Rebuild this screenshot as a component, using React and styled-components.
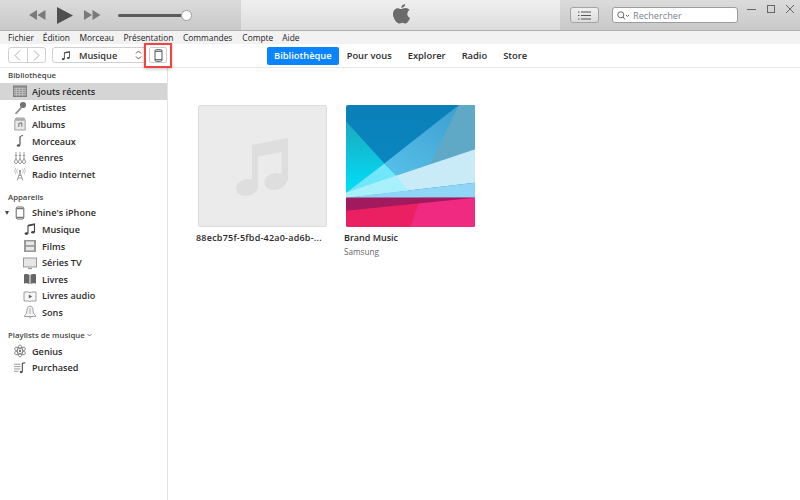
import React from "react";
import styled, { createGlobalStyle } from "styled-components";

const Global = createGlobalStyle`
  html, body { margin: 0; padding: 0; background: #fff; }
  body { font-family: "Open Sans", "Liberation Sans", sans-serif; color: #222; }
  * { box-sizing: border-box; }
`;

const Win = styled.div`width: 800px; height: 500px; display: flex; flex-direction: column; overflow: hidden; background: #fff;`;

const TitleBar = styled.header`
  height: 31px; display: flex; flex: none; border-bottom: 1px solid #b0b0b0;
  background: linear-gradient(#dbdbdb, #c9c9c9);
`;
const Transport = styled.div`width: 241px; display: flex; align-items: center; padding: 0 0 0 29px; flex: none;`;
const Lcd = styled.div`flex: 1; display: flex; align-items: center; justify-content: center; padding-bottom: 1px;
  background: linear-gradient(#efefef, #dddddd); `;
const RightTools = styled.div`width: 240px; flex: none; display: flex; align-items: flex-start; padding: 7px 0 0 10px;`;
const TIcon = styled.svg`display: block; flex: none; margin-right: ${p => p.$mr || 0}px;`;
const Track = styled.div`width: 69px; height: 3px; margin-left: 17px; background: #5c5c5c; border-radius: 2px; position: relative;`;
const Knob = styled.div`position: absolute; right: -5px; top: -4px; width: 11px; height: 11px; border-radius: 50%; background: #fff; border: 1px solid #a0a0a0;`;
const ListBtn = styled.div`width: 29px; height: 16px; border: 1px solid #a3a3a3; border-radius: 3px; display: flex; align-items: center; justify-content: center; background: linear-gradient(#f0f0f0, #dcdcdc);`;
const Search = styled.div`width: 126px; height: 16px; margin-left: 13px; border: 1px solid #9c9c9c; border-radius: 3px; background: #fff; display: flex; align-items: center; padding-left: 4px; font-size: 9.2px; color: #77838f; gap: 3px;`;
const WinBtns = styled.div`display: flex; gap: 9px; margin: -3px 0 0 9px;`;

const MenuBar = styled.nav`height: 13px; flex: none; background: #f2f2f2; display: flex; padding-left: 8px; font-size: 8.4px; line-height: 13px; color: #222;`;
const MenuItem = styled.span`margin-right: ${p => p.$mr}px;`;

const Toolbar = styled.div`height: 24px; flex: none; display: flex; align-items: flex-start; padding: 3px 0 0 8px; background: #fff; border-bottom: 1px solid #e8e8e8;`;
const NavPair = styled.div`display: flex; width: 38px; height: 16px; border: 1px solid #d0d0d0; border-radius: 3px;`;
const NavBtn = styled.div`flex: 1; display: flex; align-items: center; justify-content: center; & + & { border-left: 1px solid #d0d0d0; }`;
const Media = styled.div`width: 94px; height: 16px; margin-left: 6px; border: 1px solid #d0d0d0; border-radius: 3px; display: flex; align-items: center; padding: 0 3px 0 7px; font-size: 9.2px; font-weight: 600; color: #333;`;
const MediaLabel = styled.span`flex: 1; margin-left: 7px;`;
const DeviceBtn = styled.div`width: 18px; height: 16px; margin-left: 3px; border: 1px solid #d0d0d0; border-radius: 2px; display: flex; align-items: center; justify-content: center; position: relative;
  &::after { content: ""; position: absolute; left: -6px; right: -6px; top: -5px; bottom: -6px; border: 2px solid #ee4544; box-shadow: 0 1px 3px rgba(0,0,0,.25); }
`;
const Tabs = styled.div`display: flex; margin-left: 100px; align-items: center; height: 18px;`;
const Tab = styled.div`height: 18px; line-height: 17px; padding: 0 7px; margin-right: ${p => p.$mr || 0}px; border-radius: 2px; font-size: 9.35px; font-weight: 600; color: ${p => p.$on ? "#fff" : "#2b2b2b"}; background: ${p => p.$on ? "#0a84ff" : "transparent"};`;

const Body = styled.div`flex: 1; display: flex; min-height: 0;`;
const Sidebar = styled.aside`width: 168px; flex: none; border-right: 1px solid #e4e4e4;`;
const SecHead = styled.div`height: 15px; line-height: 15px; padding-left: 8px; margin-top: ${p => p.$mt || 0}px; font-size: 7.8px; font-weight: 600; color: #444; display: flex; align-items: center; gap: 2px;`;
const Row = styled.div`height: 16.6px; display: flex; align-items: center; padding-left: ${p => p.$pl || 13}px; font-size: 9.15px; font-weight: 600; color: #2c2c2c; background: ${p => p.$on ? "#d5d5d5" : "transparent"}; position: relative;`;
const RowIcon = styled.span`width: 14px; height: 14px; display: flex; align-items: center; justify-content: center; margin-right: 5px; flex: none;`;
const Arrow = styled.span`position: absolute; left: 5px; top: 6px; width: 0; height: 0; border-left: 2.5px solid transparent; border-right: 2.5px solid transparent; border-top: 4px solid #444;`;

const Main = styled.main`flex: 1; display: flex; padding: 37px 0 0 30px; gap: 19px; align-items: flex-start;`;
const Album = styled.div`width: 129px;`;
const Blank = styled.div`width: 129px; height: 122px; background: #ebebeb; border: 1px solid #dcdcdc; border-radius: 2px; display: flex; align-items: center; justify-content: center;`;
const Cover = styled.svg`display: block; width: 129px; height: 122px; border-radius: 2px;`;
const AlbumTitle = styled.div`margin: 5px 0 0 -2px; font-size: 9px; line-height: 12px; font-weight: 600; color: #2a2a2a; white-space: nowrap; letter-spacing: ${p => p.$ls || 0}px;`;
const AlbumSub = styled.div`margin: 2px 0 0 -2px; font-size: 8.2px; line-height: 11px; color: #666;`;

const Svg = ({ w = 14, h = 14, vb, children, ...r }) => <svg width={w} height={h} viewBox={vb || `0 0 ${w} ${h}`} fill="none" {...r}>{children}</svg>;

const icons = {
  grid: <Svg><rect x="0.5" y="2" width="13" height="10.5" fill="#999" stroke="#7a7a7a"/><path d="M0.5 4.5h13M0.5 6.5h13M0.5 8.5h13M0.5 10.5h13M3.5 4v8.5M6.5 4v8.5M9.5 4v8.5" stroke="#c8c8c8" strokeWidth=".6"/></Svg>,
  mic: <Svg><circle cx="10" cy="4" r="3" fill="#6a6a6a"/><path d="M8.3 2.800l3 3M7.800 4.200l2.500 2.500M9.600 1.600l2.800 2.800" stroke="#aaa" strokeWidth=".4"/><path d="M7.800 5.800L2 12.200l1 1.300L8.800 7.500z" fill="#8e8e8e"/></Svg>,
  album: <Svg><path d="M3 1h8l1.200 2.500V13H1.800V3.500z" fill="#e8e8e8" stroke="#8a8a8a" strokeWidth=".8"/><path d="M2 1.300h10v2.500H2z" fill="#aaa"/><path d="M5.800 10V6.400l3-.6v3.800" stroke="#555" strokeWidth=".8"/></Svg>,
  note: <Svg><path d="M7 3c.8-1 2-1.500 3-1.500M7 2.500V11" stroke="#555" strokeWidth="1.200"/><ellipse cx="5.500" cy="11.500" rx="1.700" ry="1.200" fill="#555"/></Svg>,
  genres: <Svg><path d="M3 1v7M7 1v7M11 1v7M1.800 4.500h2.400M5.800 4.500h2.400M9.800 4.500h2.400" stroke="#888" strokeWidth=".8"/><path d="M3 7.500l2 3.500-2 2-2-2zM7 7.500l2 3.500-2 2-2-2zM11 7.500l2 3.500-2 2-2-2z" stroke="#888" strokeWidth=".8" fill="#eee"/></Svg>,
  radio: <Svg><path d="M7 5L4.200 13.500M7 5l2.800 8.500M5 11h4M5.800 8.500h2.400" stroke="#888" strokeWidth=".8"/><circle cx="7" cy="4" r="1" fill="#777"/><path d="M4.500 1.800a3.500 3.500 0 0 0 0 4.400M9.500 1.800a3.500 3.500 0 0 1 0 4.400M2.800.8a5.500 5.500 0 0 0 0 6.400M11.200.8a5.500 5.500 0 0 1 0 6.400" stroke="#aaa" strokeWidth=".7"/></Svg>,
  phone: <Svg><rect x="3.200" y="1" width="7.600" height="12" rx="1.500" stroke="#555" strokeWidth=".9"/><path d="M3.500 2.700h7M3.500 11.300h7" stroke="#555" strokeWidth="1"/></Svg>,
  music: <Svg><path d="M5 3.300l6.500-1.300v8M5 3.300V11.500" stroke="#444" strokeWidth="1.100"/><path d="M5 3.300l6.500-1.300v1.300L5 4.600z" fill="#444"/><ellipse cx="3.400" cy="11.600" rx="1.800" ry="1.300" fill="#444"/><ellipse cx="9.900" cy="10.200" rx="1.800" ry="1.300" fill="#444"/></Svg>,
  film: <Svg><rect x="1" y="1" width="12" height="12" fill="#999"/><rect x="3" y="2.500" width="8" height="3.600" fill="#e8e8e8"/><rect x="3" y="7.800" width="8" height="3.600" fill="#e8e8e8"/></Svg>,
  tv: <Svg><rect x="0.500" y="2" width="13" height="9" fill="#e6e6e6" stroke="#999"/><path d="M5 12.500h4" stroke="#999" strokeWidth="1.200"/></Svg>,
  book: <Svg><path d="M1 2.500c2-.8 4-.6 5.500.3V12c-1.500-.9-3.500-1-5.500-.3zM13 2.500c-2-.8-4-.6-5.500.3V12c1.500-.9 3.500-1 5.500-.3z" fill="#666"/></Svg>,
  audiobook: <Svg><path d="M1 3h4.500L7 3.800 8.500 3H13v9H8.500L7 12.500 5.500 12H1z" stroke="#888" strokeWidth=".8" fill="#f6f6f6"/><path d="M5.800 5.500l3.400 2-3.400 2z" fill="#666"/></Svg>,
  bell: <Svg><path d="M7 1.200c2.200 0 3 1.800 3 4 0 2.600 1 4 2.500 5.300v1h-11v-1C3 9.200 4 7.800 4 5.200c0-2.200.8-4 3-4z" stroke="#888" strokeWidth=".8" fill="#f4f4f4"/><path d="M5.800 12.200c.3 1.200 2.100 1.200 2.400 0M7 3v6" stroke="#999" strokeWidth=".8"/></Svg>,
  atom: <Svg><ellipse cx="7" cy="7" rx="2.600" ry="6" stroke="#777" strokeWidth=".8"/><ellipse cx="7" cy="7" rx="2.600" ry="6" stroke="#777" strokeWidth=".8" transform="rotate(60 7 7)"/><ellipse cx="7" cy="7" rx="2.600" ry="6" stroke="#777" strokeWidth=".8" transform="rotate(120 7 7)"/><circle cx="7" cy="7" r="1.200" fill="#777"/></Svg>,
  playlist: <Svg w={15}><path d="M1 3h7M1 5.500h7M1 8h7M1 10.500h5" stroke="#888" strokeWidth=".9"/><path d="M10 11V2.200c1-.8 2-.8 3.200-.8" stroke="#444" strokeWidth="1.100"/><ellipse cx="8.800" cy="11.400" rx="1.600" ry="1.200" fill="#444"/></Svg>,
};

const library = [["grid", "Ajouts récents", true], ["mic", "Artistes"], ["album", "Albums"], ["note", "Morceaux"], ["genres", "Genres"], ["radio", "Radio Internet"]];
const device = [["music", "Musique"], ["film", "Films"], ["tv", "Séries TV"], ["book", "Livres"], ["audiobook", "Livres audio"], ["bell", "Sons"]];
const playlists = [["atom", "Genius"], ["playlist", "Purchased"]];
const menus = [["Fichier", 9], ["Édition", 9.5], ["Morceau", 9.5], ["Présentation", 9.5], ["Commandes", 10], ["Compte", 9], ["Aide", 0]];

export default function App() {
  return (
    <Win>
      <Global />
      <TitleBar>
        <Transport>
          <TIcon width="17" height="10" viewBox="0 0 17 10" $mr={11}><path d="M8 0v10L0 5zM16.500 0v10L8.500 5z" fill="#7a7a7a"/></TIcon>
          <TIcon width="16" height="17" viewBox="0 0 16 17" $mr={11}><path d="M0 0l16 8.500L0 17z" fill="#4f4f4f"/></TIcon>
          <TIcon width="17" height="10" viewBox="0 0 17 10"><path d="M0 0v10l8-5zM8.500 0v10l8-5z" fill="#7a7a7a"/></TIcon>
          <Track><Knob /></Track>
        </Transport>
        <Lcd>
          <svg width="18" height="21" viewBox="0 0 18 21"><path d="M13.200 0c.1 1.900-1.700 3.900-3.900 3.800C9 2 11 .2 13.200 0zM9.400 5c1 0 2.400-1.100 4.200-1 1.700 0 3.100.8 4 2.100-3.400 2-2.800 6.700.4 8-.9 2.300-2.600 5.400-4.400 5.400-1.200 0-1.800-.8-3.200-.8-1.500 0-2.100.8-3.200.8C4.600 19.500 1 14.300 1 10c0-3.600 2.300-5.800 4.800-5.800 1.400 0 2.600.8 3.600.8z" fill="#6b6b6b"/></svg>
        </Lcd>
        <RightTools>
          <ListBtn>
            <svg width="13" height="9" viewBox="0 0 13 9"><path d="M0 1h1.500M0 4.500h1.500M0 8h1.500M3 1h10M3 4.500h10M3 8h10" stroke="#555" strokeWidth="1"/></svg>
          </ListBtn>
          <Search>
            <svg width="13" height="9" viewBox="0 0 13 9" fill="none"><circle cx="3.800" cy="3.800" r="3" stroke="#666"/><path d="M6 6l2 2.500M9 4l1.500 1.500L12 4" stroke="#666"/></svg>
            Rechercher
          </Search>
          <WinBtns>
            <svg width="10" height="10" viewBox="0 0 10 10"><path d="M0 5.500h9" stroke="#666"/></svg>
            <svg width="10" height="10" viewBox="0 0 10 10" fill="none"><rect x="1.500" y="1.500" width="7" height="7" stroke="#666"/></svg>
            <svg width="10" height="10" viewBox="0 0 10 10"><path d="M1 1l8 8M9 1l-8 8" stroke="#666"/></svg>
          </WinBtns>
        </RightTools>
      </TitleBar>
      <MenuBar>
        {menus.map(([m, mr]) => <MenuItem key={m} $mr={mr}>{m}</MenuItem>)}
      </MenuBar>
      <Toolbar>
        <NavPair>
          <NavBtn><svg width="7" height="11" viewBox="0 0 7 11" fill="none"><path d="M6 .5L1 5.500l5 5" stroke="#aaa"/></svg></NavBtn>
          <NavBtn><svg width="7" height="11" viewBox="0 0 7 11" fill="none"><path d="M1 .5l5 5-5 5" stroke="#aaa"/></svg></NavBtn>
        </NavPair>
        <Media>
          <svg width="12" height="11" viewBox="0 0 14 14" fill="none">{icons.music.props.children}</svg>
          <MediaLabel>Musique</MediaLabel>
          <svg width="7" height="10" viewBox="0 0 7 10" fill="none"><path d="M1 3.500l2.500-2.500L6 3.500M1 6.500L3.500 9 6 6.500" stroke="#555"/></svg>
        </Media>
        <DeviceBtn>
          <svg width="9" height="13" viewBox="0 0 9 13" fill="none"><rect x="1" y=".7" width="7" height="11.600" rx="1.300" stroke="#555"/><path d="M1 2.300h7M1 10.700h7" stroke="#555"/></svg>
        </DeviceBtn>
        <Tabs>
          <Tab $on $mr={1}>Bibliothèque</Tab>
          <Tab $mr={2}>Pour vous</Tab>
          <Tab $mr={2}>Explorer</Tab>
          <Tab $mr={2}>Radio</Tab>
          <Tab>Store</Tab>
        </Tabs>
      </Toolbar>
      <Body>
        <Sidebar>
          <SecHead>Bibliothèque</SecHead>
          {library.map(([i, t, on]) => <Row key={t} $on={on}><RowIcon>{icons[i]}</RowIcon>{t}</Row>)}
          <SecHead $mt={7}>Appareils</SecHead>
          <Row><Arrow /><RowIcon>{icons.phone}</RowIcon>Shine's iPhone</Row>
          {device.map(([i, t]) => <Row key={t} $pl={23}><RowIcon>{icons[i]}</RowIcon>{t}</Row>)}
          <SecHead $mt={7}>Playlists de musique
            <svg width="5" height="4" viewBox="0 0 5 4" fill="none"><path d="M.5 1l2 2 2-2" stroke="#555" strokeWidth=".8"/></svg>
          </SecHead>
          {playlists.map(([i, t]) => <Row key={t}><RowIcon>{icons[i]}</RowIcon>{t}</Row>)}
        </Sidebar>
        <Main>
          <Album>
            <Blank>
              <svg width="54" height="60" viewBox="0 0 54 60"><path d="M16 9L52 2v43h-1.500c-.5 5-6 9-12 9-6.500 0-10-3.500-10-7.500 0-5.500 6-9.500 12-9.500 2 0 3.500.3 5 1V16L22 20.500V52c-.5 4-6 8-12 8C4 60 0 56.500 0 52.500 0 47 6 43 12 43c1.500 0 3 .3 4 .8z" fill="#dedede"/></svg>
            </Blank>
            <AlbumTitle $ls={0.22}>88ecb75f-5fbd-42a0-ad6b-...</AlbumTitle>
          </Album>
          <Album>
            <Cover viewBox="0 0 128 121" preserveAspectRatio="none">
              <defs>
                <linearGradient id="tl" x1="0" y1="0" x2="0" y2="1"><stop offset="0" stopColor="#0a7fb8"/><stop offset="1" stopColor="#0a8fc6"/></linearGradient>
                <linearGradient id="cy" x1="0" y1="0" x2="0" y2="1"><stop offset="0" stopColor="#1ca8bc"/><stop offset="1" stopColor="#00e0fb"/></linearGradient>
                <linearGradient id="ray" x1="1" y1="0" x2="0" y2="1"><stop offset="0" stopColor="#3a9ccc"/><stop offset="1" stopColor="#58c0ea"/></linearGradient>
              </defs>
              <rect width="128" height="121" fill="url(#tl)"/>
              <path d="M0 16L38 58 0 87z" fill="url(#cy)"/>
              <path d="M112 0L38 58l12 12 78-26V0z" fill="url(#ray)"/>
              <path d="M112 0h16v44L84 58z" fill="#5fa9c6"/>
              <path d="M38 58L0 87v3l50-20z" fill="#6fe6fa"/>
              <path d="M50 70L0 90l0 2 128-15V44z" fill="#c9ebf7"/>
              <path d="M50 70L0 87v5l62-7z" fill="#a8f0fc"/>
              <path d="M0 92l128-15v15z" fill="#8fd6f6"/>
              <path d="M0 92h128v29H0z" fill="#eb2062"/>
              <path d="M74 92h54v29H64z" fill="#f02a80"/>
              <path d="M0 92h128L0 105z" fill="#a11a5d"/>
            </Cover>
            <AlbumTitle>Brand Music</AlbumTitle>
            <AlbumSub>Samsung</AlbumSub>
          </Album>
        </Main>
      </Body>
    </Win>
  );
}
